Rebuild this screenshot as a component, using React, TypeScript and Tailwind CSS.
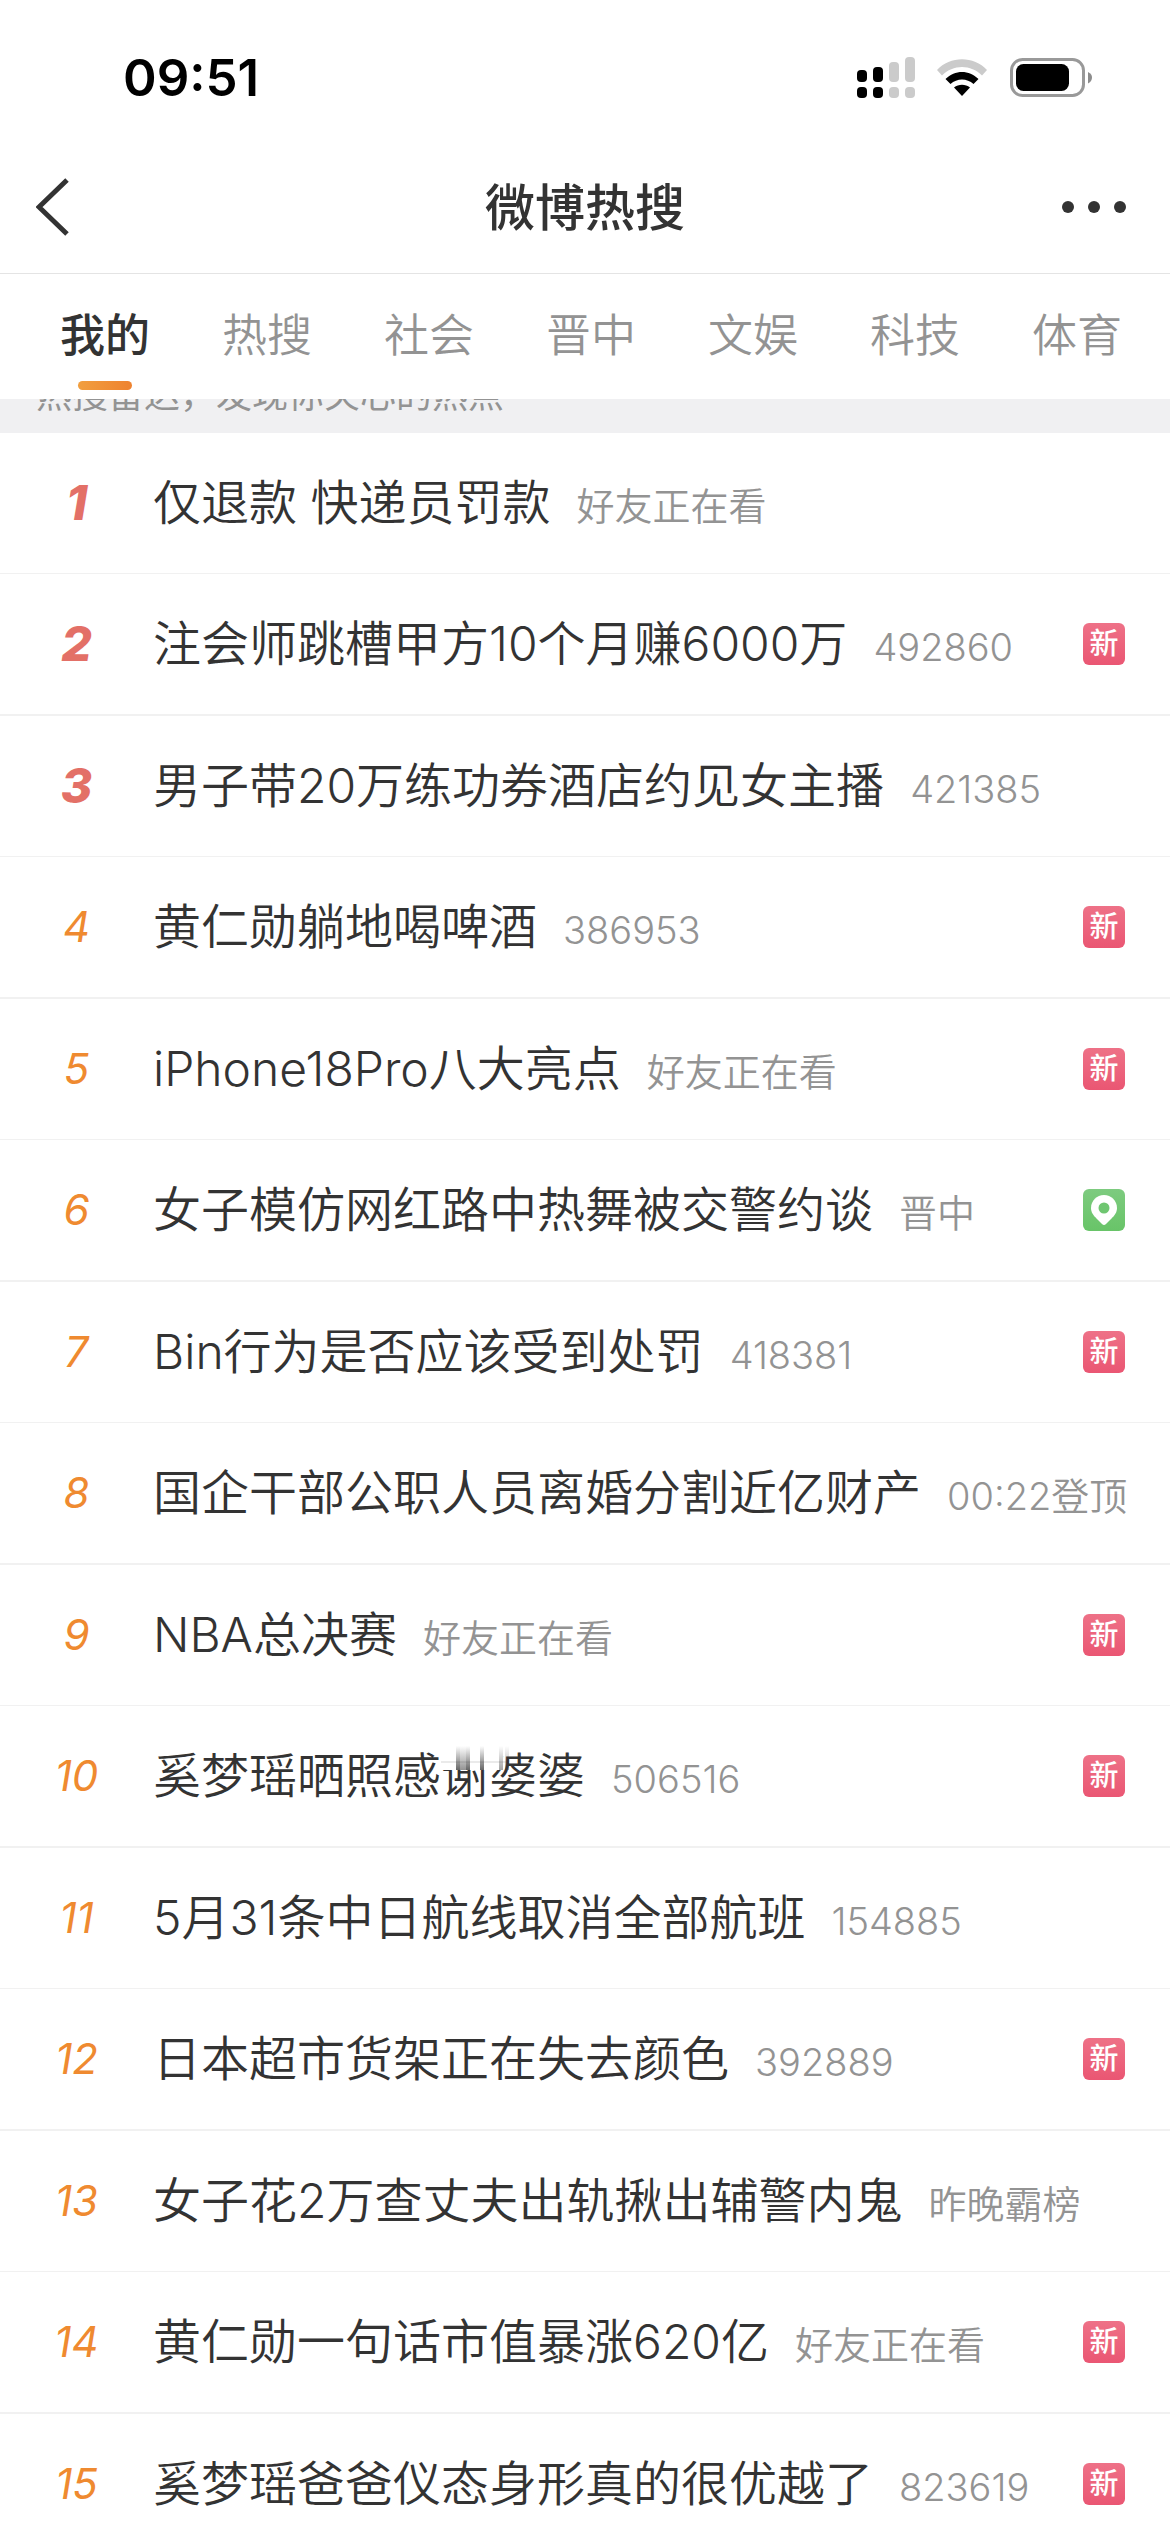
import { clsx } from 'clsx'

interface HotItem {
  title: string
  note: string
  badge?: 'new' | 'local'
  /** Index of the character the touch smudge sits on */
  smudgeAt?: number
}

const tabs = ['我的', '热搜', '社会', '晋中', '文娱', '科技', '体育']

const items: HotItem[] = [
  { title: '仅退款 快递员罚款', note: '好友正在看' },
  { title: '注会师跳槽甲方10个月赚6000万', note: '492860', badge: 'new' },
  { title: '男子带20万练功券酒店约见女主播', note: '421385' },
  { title: '黄仁勋躺地喝啤酒', note: '386953', badge: 'new' },
  { title: 'iPhone18Pro八大亮点', note: '好友正在看', badge: 'new' },
  { title: '女子模仿网红路中热舞被交警约谈', note: '晋中', badge: 'local' },
  { title: 'Bin行为是否应该受到处罚', note: '418381', badge: 'new' },
  { title: '国企干部公职人员离婚分割近亿财产', note: '00:22登顶' },
  { title: 'NBA总决赛', note: '好友正在看', badge: 'new' },
  { title: '奚梦瑶晒照感谢婆婆', note: '506516', badge: 'new', smudgeAt: 6 },
  { title: '5月31条中日航线取消全部航班', note: '154885' },
  { title: '日本超市货架正在失去颜色', note: '392889', badge: 'new' },
  { title: '女子花2万查丈夫出轨揪出辅警内鬼', note: '昨晚霸榜' },
  { title: '黄仁勋一句话市值暴涨620亿', note: '好友正在看', badge: 'new' },
  { title: '奚梦瑶爸爸仪态身形真的很优越了', note: '823619', badge: 'new' },
]

function StatusBar() {
  return (
    <div className="flex h-[138px] shrink-0 items-center justify-between pt-[18px] pr-[78px] pl-[123px]">
      <span className="text-[51px] leading-[60px] font-semibold text-black">09:51</span>
      <div className="flex items-center">
        <svg width="58" height="42" viewBox="0 0 58 42" aria-hidden="true">
          <g fill="#000">
            <rect x="0" y="13" width="10" height="12" rx="4" />
            <rect x="16" y="10" width="10" height="15" rx="4" />
            <rect x="0" y="30" width="10" height="11" rx="4" />
            <rect x="16" y="30" width="10" height="11" rx="4" />
          </g>
          <g fill="#cbcbcb">
            <rect x="32" y="5" width="10" height="20" rx="4" />
            <rect x="48" y="0" width="10" height="25" rx="4" />
            <rect x="32" y="30" width="10" height="11" rx="4" />
            <rect x="48" y="30" width="10" height="11" rx="4" />
          </g>
        </svg>
        <svg className="ml-[22px]" width="50" height="38" viewBox="0 0 50 38" aria-hidden="true">
          <path d="M0 11C13-3.500 37-3.500 50 11L45 16.500C34 5 16 5 5 16.500Z" fill="#cbcbcb" />
          <path d="M8.500 20C18 10.500 32 10.500 41.500 20L36.500 25C30 19 20 19 13.500 25Z" fill="#000" />
          <path d="M17 28.500C21.500 24.800 28.500 24.800 33 28.500L25 37Z" fill="#000" />
        </svg>
        <svg className="ml-[23px]" width="82" height="40" viewBox="0 0 82 40" aria-hidden="true">
          <rect x="1.500" y="1.500" width="72" height="36" rx="11" fill="none" stroke="#999" strokeWidth="3" />
          <rect x="6" y="6" width="53" height="27" rx="7.500" fill="#000" />
          <path d="M78 14C81 15.500 82 17.500 82 19.500C82 21.500 81 24 78 25.500Z" fill="#8c8c8c" />
        </svg>
      </div>
    </div>
  )
}

function NavBar() {
  return (
    <header className="flex h-[136px] shrink-0 items-center justify-between border-b border-[#e4e4e4] px-[36px] pt-[2px]">
      <button type="button" aria-label="返回" className="flex w-[90px]">
        <svg width="34" height="58" viewBox="0 0 34 58" fill="none" aria-hidden="true">
          <path d="M31 2L3 29L31 56" stroke="#333" strokeWidth="5" />
        </svg>
      </button>
      <h1 className="pt-[3px] text-[50px] leading-[60px] font-medium text-[#333]">微博热搜</h1>
      <button type="button" aria-label="更多" className="flex w-[90px] justify-end pr-[8px]">
        <svg width="64" height="12" viewBox="0 0 64 12" fill="#333" aria-hidden="true">
          <circle cx="6" cy="6" r="6" />
          <circle cx="32" cy="6" r="6" />
          <circle cx="58" cy="6" r="6" />
        </svg>
      </button>
    </header>
  )
}

function TabBar() {
  return (
    <nav className="flex h-[125px] shrink-0 justify-between pr-[48px] pl-[60px]">
      {tabs.map((tab, i) => (
        <button
          key={tab}
          type="button"
          className={clsx(
            'flex flex-col items-center pt-[32px] text-[45px] leading-[60px]',
            i === 0 ? 'font-medium text-[#333]' : 'font-[350] text-[#939393]',
          )}
        >
          {tab}
          {i === 0 && (
            <span className="mt-[15px] h-[9px] w-[54px] rounded-full bg-linear-to-r from-[#f19f3f] to-[#ee822f]" />
          )}
        </button>
      ))}
    </nav>
  )
}

function Badge({ kind }: { kind: 'new' | 'local' }) {
  if (kind === 'local') {
    return (
      <svg className="shrink-0" width="42" height="42" viewBox="0 0 42 42" role="img" aria-label="同城">
        <defs>
          <linearGradient id="local-bg" x1="0" y1="0" x2="0" y2="1">
            <stop offset="0" stopColor="#7dcb7f" />
            <stop offset="1" stopColor="#68c468" />
          </linearGradient>
        </defs>
        <rect width="42" height="42" rx="6" fill="url(#local-bg)" />
        <path
          d="M21 6C13.800 6 8 11.800 8 19C8 23.500 10.500 26.500 13.500 29.500L19 35Q21 37 23 35L28.500 29.500C31.500 26.500 34 23.500 34 19C34 11.800 28.200 6 21 6Z"
          fill="#fff"
        />
        <circle cx="21" cy="19" r="5.500" fill="#6fc671" />
      </svg>
    )
  }
  return (
    <span className="flex size-[42px] shrink-0 items-center justify-center rounded-[6px] bg-linear-to-b from-[#ee7187] to-[#ea5673] text-[29px] leading-[42px] font-medium text-white">
      新
    </span>
  )
}

function Smudge() {
  return (
    <svg
      className="absolute top-0 left-0"
      width="72"
      height="26"
      viewBox="0 0 72 26"
      aria-hidden="true"
    >
      <defs>
        <linearGradient id="smudge-fade" x1="0" y1="0" x2="0" y2="1">
          <stop offset="0" stopColor="#333" stopOpacity="0" />
          <stop offset="1" stopColor="#333" stopOpacity="0.75" />
        </linearGradient>
      </defs>
      <rect x="0" y="0" width="62" height="24" fill="#fff" />
      <g fill="url(#smudge-fade)">
        <rect x="15" y="0" width="4" height="24" />
        <rect x="19" y="0" width="6" height="24" opacity="0.7" />
        <rect x="25" y="0" width="4" height="24" />
        <rect x="39" y="0" width="4" height="24" />
        <rect x="58" y="0" width="4" height="24" opacity="0.6" />
        <rect x="64" y="0" width="4" height="24" opacity="0.5" />
      </g>
      <rect x="0" y="15" width="66" height="2" fill="#333" opacity="0.1" />
    </svg>
  )
}

function Title({ item }: { item: HotItem }) {
  if (item.smudgeAt === undefined) return <>{item.title}</>
  return (
    <>
      {item.title.slice(0, item.smudgeAt)}
      <span className="relative inline-block">
        {item.title.slice(item.smudgeAt)}
        <Smudge />
      </span>
    </>
  )
}

function HotRow({ item, rank }: { item: HotItem; rank: number }) {
  return (
    <li className="border-[#f1f1f1] odd:border-b even:border-b-2">
      <a href="#" className="flex h-[140px] items-center pr-[45px]">
        <span
          className={clsx(
            'w-[153px] shrink-0 text-center italic',
            rank <= 3
              ? 'text-[48px] leading-[60px] font-extrabold text-[#e37067]'
              : 'text-[42px] leading-[60px] text-[#ef8a30]',
          )}
        >
          {rank}
        </span>
        <span className="flex flex-1 items-baseline gap-[26px] pt-[3px] whitespace-nowrap">
          <span className="text-[48px] leading-[60px] font-[350] text-[#333]">
            <Title item={item} />
          </span>
          <span className="text-[38px] leading-[60px] font-[350] text-[#939393]">{item.note}</span>
        </span>
        {item.badge && <Badge kind={item.badge} />}
      </a>
    </li>
  )
}

export default function App() {
  return (
    <div className="flex h-screen flex-col overflow-hidden bg-white font-['Inter','Noto_Sans_CJK_SC',sans-serif]">
      <StatusBar />
      <NavBar />
      <TabBar />
      <main className="min-h-0 flex-1 overflow-hidden">
        {/* banner is mostly scrolled away under the tabs */}
        <div className="flex h-[34px] items-end overflow-hidden bg-[#f0f0f2] px-[36px] pb-[20px]">
          <p className="text-[36px] leading-[36px] text-[#939393]">热搜雷达，发现你关心的热点</p>
        </div>
        <ol>
          {items.map((item, i) => (
            <HotRow key={item.title} item={item} rank={i + 1} />
          ))}
        </ol>
      </main>
    </div>
  )
}
